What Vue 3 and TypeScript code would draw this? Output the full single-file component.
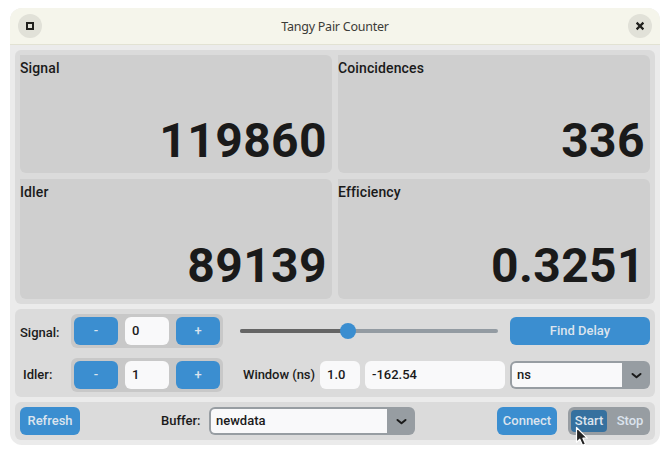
<script setup lang="ts">
import { ref } from 'vue'

interface Reading { label: string; value: string; key: string }

const readings: Reading[] = [
  { label: 'Signal', value: '119860', key: 'signal' },
  { label: 'Coincidences', value: '336', key: 'coincidences' },
  { label: 'Idler', value: '89139', key: 'idler' },
  { label: 'Efficiency', value: '0.3251', key: 'efficiency' },
]
const signalChannel = ref(0)
const idlerChannel = ref(1)
const delayPosition = ref(42)
</script>

<template>
  <main class="window">
    <header class="titlebar">
      <button class="round" aria-label="Maximize">
        <svg width="24" height="24" viewBox="0 0 24 24"><rect x="9" y="9" width="6" height="6" fill="none" stroke="#20201d" stroke-width="2" /></svg>
      </button>
      <h1>Tangy Pair Counter</h1>
      <button class="round" aria-label="Close">
        <svg width="24" height="24" viewBox="0 0 24 24"><path d="M8.6 8.6 L15.4 15.4 M15.4 8.6 L8.6 15.4" stroke="#20201d" stroke-width="2.2" /></svg>
      </button>
    </header>

    <div class="body">
      <section class="panel readings">
        <article v-for="r in readings" :key="r.key" class="card">
          <h2 :class="r.key">{{ r.label }}</h2>
          <div class="value">{{ r.value }}</div>
        </article>
      </section>

      <section class="panel controls">
        <div class="row">
          <span class="name signal-name">Signal:</span>
          <div class="spin">
            <button class="btn" @click="signalChannel--">-</button>
            <span class="field">{{ signalChannel }}</span>
            <button class="btn" @click="signalChannel++">+</button>
          </div>
          <div class="slider">
            <div class="track"><div class="fill" :style="{ width: delayPosition + '%' }"><i class="knob"></i></div></div>
          </div>
          <button class="btn find">Find Delay</button>
        </div>
        <div class="row">
          <span class="name idler-name">Idler:</span>
          <div class="spin">
            <button class="btn" @click="idlerChannel--">-</button>
            <span class="field">{{ idlerChannel }}</span>
            <button class="btn" @click="idlerChannel++">+</button>
          </div>
          <span class="window-name">Window (ns)</span>
          <span class="field width-field">1.0</span>
          <span class="field delay-field">-162.54</span>
          <div class="combo units">
            <span>ns</span>
            <svg width="28" height="28" viewBox="0 0 28 28"><path d="M10.5 13 L14.5 16.3 L18.5 13" /></svg>
          </div>
        </div>
      </section>

      <section class="panel footer">
        <button class="btn refresh">Refresh</button>
        <span class="buffer-name">Buffer:</span>
        <div class="combo buffer">
          <span>newdata</span>
          <svg width="28" height="28" viewBox="0 0 28 28"><path d="M10.5 13 L14.5 16.3 L18.5 13" /></svg>
        </div>
        <button class="btn connect">Connect</button>
        <div class="segments">
          <button class="active">Start</button>
          <button class="stop">Stop</button>
          <svg class="pointer" width="16" height="22" viewBox="0 0 16 22"><path d="M1.5 1.5 V16.2 L4.8 13.2 L7.5 19.3 L10.5 18 L7.9 12.2 H12.2 Z" /></svg>
        </div>
      </section>
    </div>
  </main>
</template>

<style>
body { margin: 0; background: #fff; }
</style>

<style scoped>
* { box-sizing: border-box; }
button { border: 0; padding: 0; margin: 0; font: inherit; color: inherit; letter-spacing: inherit; }
svg { display: block; }
.window {
  width: 650px; height: 437px; margin: 8px 10px 0; border-radius: 12px;
  overflow: hidden; background: #ebebeb; color: #1a1a1a;
  font: 500 13px/16px Roboto, sans-serif; letter-spacing: 0;
}
.titlebar {
  height: 37px; padding: 0 8px; border-bottom: 1px solid #e2e2d3; background: #f5f5eb;
  display: flex; align-items: center; justify-content: space-between;
}
.titlebar h1 { margin: 0; padding-top: 2px; font: 400 12.5px/18px "Noto Sans", sans-serif; letter-spacing: -0.24px; color: #3c3c38; }
.round { width: 24px; height: 24px; border-radius: 50%; background: #e1e1d8; }
.body { padding: 5px; display: flex; flex-direction: column; gap: 5px; }
.panel { background: #dbdbdb; border-radius: 6px; }
.readings {
  height: 254px; padding: 5px; display: grid; gap: 6px;
  grid-template-columns: 1fr 1fr; grid-template-rows: 118px 120px;
}
.card {
  background: #cfcfcf; border-radius: 0 6px 6px 6px; padding: 4px 5px 0 0;
  display: flex; flex-direction: column;
}
.card h2 { margin: 0; font-size: 14px; line-height: 18px; font-weight: 500; letter-spacing: 0.12px; }
.value { margin-top: 36px; font-size: 48px; line-height: 56px; font-weight: 700; text-align: right; letter-spacing: 0.4px; }
.card:nth-child(n + 3) .value { margin-top: 37px; }
.controls { height: 88px; padding: 5px; display: flex; flex-direction: column; gap: 10px; }
.row { height: 34px; display: flex; align-items: center; }
.name { width: 51px; }
.signal-name { padding-top: 3px; }
.idler-name { padding-left: 3px; }
.spin { width: 152px; height: 34px; padding: 3px; border-radius: 6px; background: #c8c8c8; display: flex; justify-content: space-between; }
.btn { height: 28px; border-radius: 6px; background: #3b8ed0; color: #dce4ee; flex: none; }
.spin .btn, .spin .field { width: 44px; }
.field { height: 28px; line-height: 28px; padding-left: 7px; border-radius: 6px; background: #f9f9fa; flex: none; }
.slider { width: 258px; margin: 0 12px 0 17px; }
.track { height: 4px; border-radius: 2px; background: #939ba2; }
.fill { position: relative; height: 4px; border-radius: 2px; background: #656565; }
.knob { position: absolute; right: -8px; top: -6px; width: 16px; height: 16px; border-radius: 50%; background: #3b8ed0; }
.find { width: 140px; }
.window-name { width: 77px; margin-left: 20px; white-space: nowrap; letter-spacing: -0.05px; }
.width-field { width: 40px; }
.delay-field { width: 140px; margin: 0 5px; }
.combo { height: 28px; border-radius: 6px; background: #979da2; padding: 2px 0 2px 2px; display: flex; align-items: center; flex: none; }
.combo span { flex: 1; height: 24px; line-height: 24px; padding-left: 5px; background: #f9f9fa; border-radius: 4px 0 0 4px; }
.combo path { fill: none; stroke: #1a1a1a; stroke-width: 2; stroke-linecap: round; stroke-linejoin: round; }
.units { width: 140px; }
.footer { height: 38px; padding: 5px; display: flex; align-items: center; }
.refresh, .connect { width: 60px; }
.buffer-name { width: 48px; margin-left: 81px; }
.buffer { width: 206px; }
.connect { margin-left: 82px; }
.segments { position: relative; width: 82px; height: 28px; margin-left: 11px; padding: 3px; border-radius: 6px; background: #979da2; color: #dce4ee; display: flex; }
.segments button { height: 22px; background: transparent; }
.segments .active { width: 36px; border-radius: 4px; background: #36719f; }
.segments .stop { width: 40px; padding-left: 6px; }
.pointer { position: absolute; left: 7px; top: 19px; }
.pointer path { fill: #242424; stroke: #fff; stroke-width: 1.2; stroke-linejoin: round; }
</style>
